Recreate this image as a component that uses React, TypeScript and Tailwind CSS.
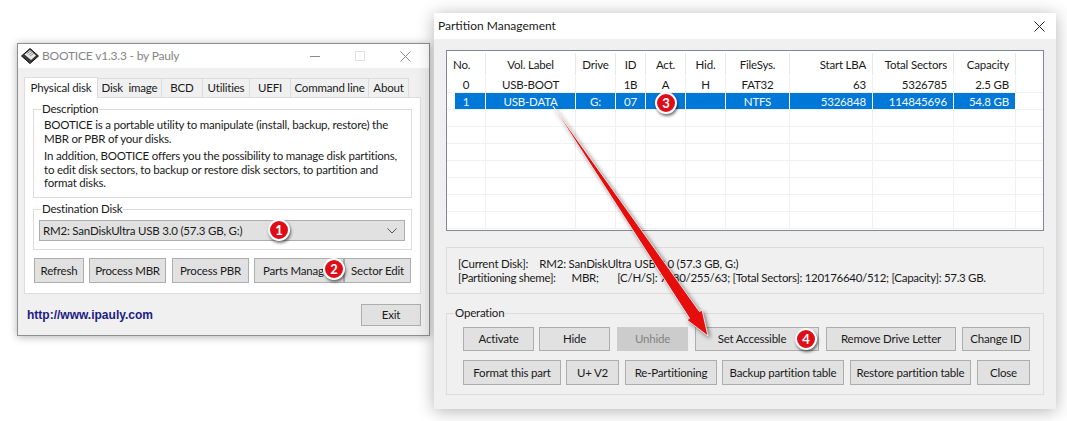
import type { ReactNode } from "react";

const FONT = "font-['Lato','Noto_Sans',sans-serif]";

const COLS = [
  "w-[39px] text-center",
  "w-[90px] text-center",
  "w-[40px] text-center",
  "w-[30px] text-center",
  "w-[40px] text-center",
  "w-[40px] text-center",
  "w-[64px] text-center",
  "w-[83px] pr-[6px] text-right",
  "w-[81px] pr-[6px] text-right",
  "w-[62px] pr-[6px] text-right",
];

const HEADER = ["No.", "Vol. Label", "Drive", "ID", "Act.", "Hid.", "FileSys.", "Start LBA", "Total Sectors", "Capacity"];
const ROW_0 = ["0", "USB-BOOT", "", "1B", "A", "H", "FAT32", "63", "5326785", "2.5 GB"];
const ROW_1 = ["1", "USB-DATA", "G:", "07", "", "", "NTFS", "5326848", "114845696", "54.8 GB"];
const EMPTY = ["", "", "", "", "", "", "", "", "", ""];

function Btn({ className, children, disabled }: { className: string; children: ReactNode; disabled?: boolean }) {
  return (
    <div
      className={`flex shrink-0 items-center justify-center whitespace-nowrap border ${
        disabled ? "border-[#cccccc] bg-[#cccccc] text-[#838383]" : "border-[#adadad] bg-[#e1e1e1] text-[#1a1a1a]"
      } ${className}`}
    >
      {children}
    </div>
  );
}

function Row({ cells, selected }: { cells: string[]; selected?: boolean }) {
  return (
    <div className="flex h-[17px] shrink-0 border-b border-[#f0f0f0] leading-[18px]">
      {cells.map((c, i) => (
        <div
          key={i}
          className={`shrink-0 border-r ${COLS[i]} ${
            selected ? "border-white bg-[#0078d7] text-[#f4f8fc]" : "border-[#f0f0f0] text-[#1a1a1a]"
          } ${selected && i === 0 ? "ml-[8px] !w-[31px] pr-[8px]" : ""}`}
        >
          {c}
        </div>
      ))}
    </div>
  );
}

function Badge({ className, n }: { className: string; n: number }) {
  return (
    <div
      className={`absolute flex h-[22px] w-[22px] items-center justify-center rounded-full border-2 border-white bg-[#df0d17] text-[13px] font-bold leading-none text-white shadow-[1px_2px_3px_rgba(0,0,0,0.55)] ${className}`}
    >
      {n}
    </div>
  );
}

function BooticeIcon() {
  return (
    <svg width="18" height="16" viewBox="0 0 18 16" className="shrink-0">
      <polygon points="9,0.5 17.5,8 9,15.5 0.5,8" fill="#3a3a3a" stroke="#111" />
      <polygon points="9,2 15,7.5 10,12 3.5,6.5" fill="#e8e8e8" />
      <path d="M6 5.5 L10 2.8 M7.5 6.8 L11.5 4 M9 8 L13 5.2" stroke="#777" strokeWidth="0.8" />
    </svg>
  );
}

function BooticeWindow() {
  return (
    <div className="absolute left-[17px] top-[43px] flex h-[293px] w-[413px] flex-col border border-[#8f8f8f] bg-[#f0f0f0] text-[11.5px] tracking-[-0.2px] shadow-[0_1px_8px_rgba(0,0,0,0.3)]">
      <div className="flex h-[24px] shrink-0 items-center bg-white pl-[3px] text-[12px] text-[#858585]">
        <BooticeIcon />
        <span className="ml-[3px]">BOOTICE v1.3.3 - by Pauly</span>
        <div className="ml-auto flex items-center">
          <div className="h-px w-[10px] bg-[#8a8a8a]" />
          <div className="ml-[35px] h-[10px] w-[10px] border border-[#e0e0e0]" />
          <svg width="11" height="11" viewBox="0 0 11 11" className="ml-[35px] mr-[18px]">
            <path d="M0.5 0.5 L10.5 10.5 M10.5 0.5 L0.5 10.5" stroke="#8a8a8a" />
          </svg>
        </div>
      </div>

      <div className="flex grow flex-col pl-[6px] pr-[8px]">
        <div className="mt-[9px] flex h-[20px] items-end leading-[18px] text-[#1a1a1a]">
          <div className="z-10 -mb-px flex h-[21px] w-[74px] items-center justify-center border border-b-0 border-[#dcdcdc] bg-white pb-px">
            Physical disk
          </div>
          <div className="h-[19px] w-[64px] border-r border-t border-[#dcdcdc] text-center">Disk&nbsp; image</div>
          <div className="h-[19px] w-[41px] border-r border-t border-[#dcdcdc] text-center">BCD</div>
          <div className="h-[19px] w-[47px] border-r border-t border-[#dcdcdc] text-center">Utilities</div>
          <div className="h-[19px] w-[41px] border-r border-t border-[#dcdcdc] text-center">UEFI</div>
          <div className="h-[19px] w-[78px] border-r border-t border-[#dcdcdc] text-center">Command line</div>
          <div className="h-[19px] w-[40px] border-r border-t border-[#dcdcdc] text-center">About</div>
        </div>

        <div className="flex h-[197px] flex-col border border-[#dcdcdc] bg-white px-[8px] pt-[4px] text-[#1a1a1a]">
          <fieldset className="h-[96px] border border-[#dcdcdc]">
            <legend className="ml-[7px] px-[1px] leading-[14px]">Description</legend>
            <div className="whitespace-nowrap pl-[10px] pt-[2px]">
              <p className="leading-[13.5px]">
                BOOTICE is a portable utility to manipulate (install, backup, restore) the
                <br />
                MBR or PBR of your disks.
              </p>
              <p className="mt-[4px] leading-[13.5px]">
                In addition, BOOTICE offers you the possibility to manage disk partitions,
                <br />
                to edit disk sectors, to backup or restore disk sectors, to partition and
                <br />
                format disks.
              </p>
            </div>
          </fieldset>

          <fieldset className="mt-[4px] h-[48px] border border-[#dcdcdc]">
            <legend className="ml-[7px] px-[1px] leading-[14px]">Destination Disk</legend>
            <div className="ml-[5px] mr-[6px] mt-[4px] flex h-[21px] items-center justify-between border border-[#adadad] bg-[#e1e1e1] pl-[3px] pr-[7px]">
              <span>RM2: SanDiskUltra USB 3.0 (57.3 GB, G:)</span>
              <svg width="10" height="6" viewBox="0 0 10 6">
                <path d="M0.5 0.5 L5 5 L9.5 0.5" fill="none" stroke="#555" />
              </svg>
            </div>
          </fieldset>

          <div className="mt-[8px] flex h-[25px] pl-px">
            <Btn className="w-[50px]">Refresh</Btn>
            <Btn className="ml-[5px] w-[77px]">Process MBR</Btn>
            <Btn className="ml-[6px] w-[77px]">Process PBR</Btn>
            <Btn className="ml-[5px] w-[90px] justify-start pl-[8px]">Parts Manager</Btn>
            <Btn className="w-[67px]">Sector Edit</Btn>
          </div>
        </div>

        <div className="mt-[10px] flex items-center justify-between">
          <a className="ml-[3px] font-['Liberation_Sans',sans-serif] text-[12px] font-bold tracking-normal text-[#1b1b85]">
            http://www.ipauly.com
          </a>
          <Btn className="h-[22px] w-[60px]">Exit</Btn>
        </div>
      </div>
    </div>
  );
}

function PartitionWindow() {
  return (
    <div className="absolute left-[434px] top-[13px] flex h-[396px] w-[622px] flex-col bg-[#f0f0f0] text-[11.5px] tracking-[-0.2px] text-[#1a1a1a] shadow-[0_2px_16px_rgba(0,0,0,0.3)]">
      <div className="flex h-[26px] shrink-0 items-center justify-between bg-white pl-[4px] pr-[11px] text-[12px] tracking-normal">
        <span>Partition Management</span>
        <svg width="11" height="11" viewBox="0 0 11 11">
          <path d="M0.5 0.5 L10.5 10.5 M10.5 0.5 L0.5 10.5" stroke="#222" />
        </svg>
      </div>

      <div className="flex grow flex-col px-[12px] pt-[11px]">
        <div className="h-[181px] overflow-hidden border border-[#828790] bg-white">
          <div className="flex h-[25px] border-b border-white pt-[2px] leading-[24px]">
            {HEADER.map((h, i) => (
              <div key={h} className={`shrink-0 border-r border-[#e8e8e8] ${i === 0 ? "w-[39px] pl-[6px]" : COLS[i]}`}>
                {h}
              </div>
            ))}
          </div>
          <Row cells={ROW_0} />
          <Row cells={ROW_1} selected />
          {[2, 3, 4, 5, 6, 7, 8].map((i) => (
            <Row key={i} cells={EMPTY} />
          ))}
        </div>

        <div className="mt-[16px] flex h-[47px] flex-col justify-center border border-[#dcdcdc] pl-[11px] leading-[14px]">
          <div className="whitespace-pre">[Current Disk]:    RM2: SanDiskUltra USB 3.0 (57.3 GB, G:)</div>
          <div className="whitespace-pre tracking-[-0.3px]">
            [Partitioning sheme]:      MBR;       [C/H/S]: 7480/255/63; [Total Sectors]: 120176640/512; [Capacity]: 57.3 GB.
          </div>
        </div>

        <fieldset className="mt-[12px] h-[89px] border border-[#dcdcdc]">
          <legend className="ml-[7px] px-[1px] leading-[14px]">Operation</legend>
          <div className="ml-[16px] mt-[7px] flex h-[24px]">
            <Btn className="w-[71px]">Activate</Btn>
            <Btn className="ml-[5px] w-[71px]">Hide</Btn>
            <Btn disabled className="ml-[7px] w-[71px]">
              Unhide
            </Btn>
            <Btn className="ml-[7px] w-[124px] pr-[10px]">Set Accessible</Btn>
            <Btn className="ml-[7px] w-[130px]">Remove Drive Letter</Btn>
            <Btn className="ml-[6px] w-[68px]">Change ID</Btn>
          </div>
          <div className="ml-[16px] mt-[9px] flex h-[25px]">
            <Btn className="w-[98px]">Format this part</Btn>
            <Btn className="ml-[5px] w-[53px]">U+ V2</Btn>
            <Btn className="ml-[6px] w-[92px]">Re-Partitioning</Btn>
            <Btn className="ml-[5px] w-[122px]">Backup partition table</Btn>
            <Btn className="ml-[6px] w-[121px]">Restore partition table</Btn>
            <Btn className="ml-[6px] w-[53px]">Close</Btn>
          </div>
        </fieldset>
      </div>
    </div>
  );
}

export default function App() {
  return (
    <div className={`relative h-[421px] w-[1067px] overflow-hidden bg-white ${FONT}`}>
      <BooticeWindow />
      <PartitionWindow />

      {/* Red annotation arrow */}
      <svg
        width="1067"
        height="421"
        viewBox="0 0 1067 421"
        className="pointer-events-none absolute left-0 top-0 drop-shadow-[2px_2px_2px_rgba(0,0,0,0.5)]"
      >
        <polygon
          points="553,106 699.5,311.7 702,310 708,336 687,320 689.5,318.3"
          fill="#e60d0d"
          stroke="#ffffff"
          strokeWidth="0.8"
          strokeLinejoin="round"
        />
      </svg>

      <Badge n={1} className="left-[268px] top-[219px]" />
      <Badge n={2} className="left-[323px] top-[258px]" />
      <Badge n={3} className="left-[655px] top-[92px]" />
      <Badge n={4} className="left-[795px] top-[328px]" />
    </div>
  );
}
